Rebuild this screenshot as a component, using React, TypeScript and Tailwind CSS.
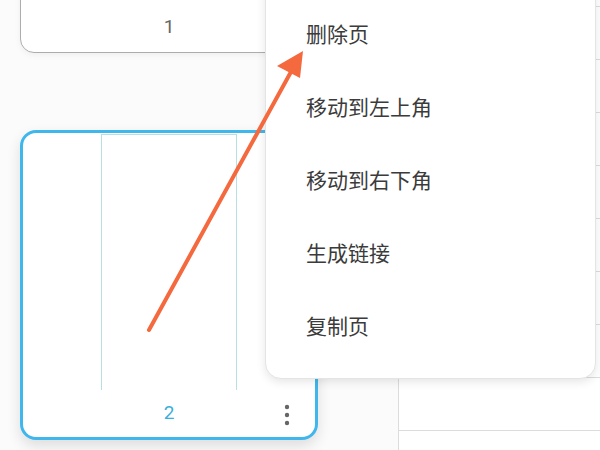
import { useState } from "react";

type MenuItem = { key: string; label: string };

const menuItems: MenuItem[] = [
  { key: "delete", label: "删除页" },
  { key: "top-left", label: "移动到左上角" },
  { key: "bottom-right", label: "移动到右下角" },
  { key: "link", label: "生成链接" },
  { key: "copy", label: "复制页" },
];

const cjk = { fontFamily: '"Noto Sans CJK SC", "Noto Sans", sans-serif' };
const digits = { fontFamily: 'Roboto, "Noto Sans", sans-serif' };

// three vertical dots used as the page card's more button
const MoreDots = () => (
  <svg width="6" height="22" viewBox="0 0 6 22" fill="#666">
    <circle cx="3" cy="3" r="2.2" />
    <circle cx="3" cy="11" r="2.2" />
    <circle cx="3" cy="19" r="2.2" />
  </svg>
);

const PageCard = ({ num, active }: { num: number; active?: boolean }) => {
  if (!active) {
    return (
      <div className="w-[298px] h-[310px] rounded-[14px] border-[1.5px] border-[#adadad] bg-white flex flex-col justify-end shadow-[0_2px_6px_rgba(0,0,0,0.05)]">
        <div className="h-[52px] flex items-center justify-center text-[19px] text-[#666]" style={digits}>
          <span className="mt-[2px]">{num}</span>
        </div>
      </div>
    );
  }
  return (
    <div className="w-[298px] h-[310px] rounded-[16px] border-[3px] border-[#3fb6ec] bg-white flex flex-col shadow-[0_6px_14px_rgba(0,0,0,0.12)]">
      <div className="flex-1 flex justify-center pt-[1px]">
        <div className="w-[136px] h-full border-t border-x border-[#b9dfe3] bg-white" />
      </div>
      <div className="h-[47px] relative flex items-center justify-center">
        <span className="text-[19px] text-[#3aaedc]" style={digits}>
          {num}
        </span>
        <button className="absolute right-[25px] top-[14px] p-0">
          <MoreDots />
        </button>
      </div>
    </div>
  );
};

export default function App() {
  const [selected, setSelected] = useState<string | null>(null);

  return (
    <div className="relative w-[600px] h-[450px] overflow-hidden bg-[#fbfbfb]" style={cjk}>
      <div className="flex h-full">
        {/* page list */}
        <div className="w-[398px] shrink-0 flex flex-col gap-[77px] pl-[20px] -mt-[257px]">
          <PageCard num={1} />
          <PageCard num={2} active />
        </div>
        {/* sheet grid behind the menu */}
        <div className="flex-1 flex flex-col border-l border-[#dcdcdc] bg-white -mt-[46px]">
          {Array.from({ length: 10 }).map((_, i) => (
            <div key={i} className="h-[53px] shrink-0 border-b border-[#dcdcdc]" />
          ))}
        </div>
      </div>

      {/* context menu */}
      <div className="absolute left-[265px] top-[-20px] w-[331px] pt-[16px] pb-[16px] bg-white rounded-b-[16px] border border-[#e4e4e4] shadow-[0_3px_10px_rgba(0,0,0,0.10)]">
        {menuItems.map((item) => (
          <div
            key={item.key}
            onClick={() => setSelected(item.key)}
            className={`h-[73px] flex items-center pl-[40px] text-[21px] text-[#3b3b3b] ${selected === item.key ? "bg-gray-50" : ""}`}
          >
            {item.label}
          </div>
        ))}
      </div>

      {/* pointer arrow */}
      <svg className="absolute inset-0 pointer-events-none" width="600" height="450" viewBox="0 0 600 450">
        <line x1="149" y1="330" x2="292" y2="70" stroke="#f4693d" strokeWidth="4" strokeLinecap="round" />
        <polygon points="303,51 277,66 300,78" fill="#f4693d" />
      </svg>
    </div>
  );
}
